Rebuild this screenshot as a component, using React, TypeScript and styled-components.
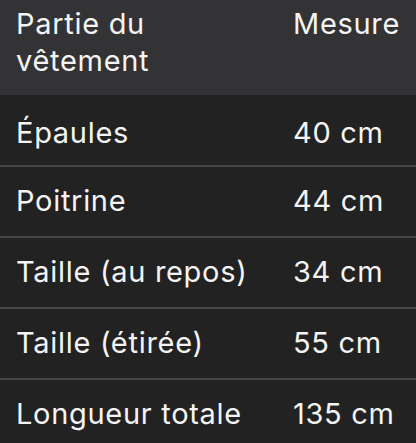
import React from "react";
import styled, { createGlobalStyle } from "styled-components";

const Global = createGlobalStyle`
  html, body { margin: 0; padding: 0; background: #222222; }
  body { font-family: Inter, Roboto, "Noto Sans", "Liberation Sans", sans-serif; }
`;

const Table = styled.div`
  width: 416px;
  height: 443px;
  background: #222222;
  color: #f4f4f4;
  font-size: 29px;
  letter-spacing: 0.7px;
  line-height: 37px;
  overflow: hidden;
`;

const Header = styled.div`
  display: grid;
  grid-template-columns: 277px 1fr;
  background: #333335;
  padding: 5px 0 16px;
  height: 95px;
  box-sizing: border-box;
`;

const Row = styled.div<{ $first?: boolean }>`
  display: grid;
  grid-template-columns: 277px 1fr;
  box-sizing: border-box;
  height: ${(p) => (p.$first ? "70px" : "71px")};
  padding-top: ${(p) => (p.$first ? "19px" : "15px")};
  border-top: ${(p) => (p.$first ? "none" : "2px solid #45464a")};
`;

const Cell = styled.div`
  padding-left: 16px;
  white-space: nowrap;
`;

const HeadCell = styled.div`
  padding-left: 16px;
`;

const rows: [string, string][] = [
  ["Épaules", "40 cm"],
  ["Poitrine", "44 cm"],
  ["Taille (au repos)", "34 cm"],
  ["Taille (étirée)", "55 cm"],
  ["Longueur totale", "135 cm"],
];

export default function App() {
  return (
    <>
      <Global />
      <Table>
        <Header>
          <HeadCell>
            Partie du
            <br />
            vêtement
          </HeadCell>
          <HeadCell>Mesure</HeadCell>
        </Header>
        {rows.map(([k, v], i) => (
          <Row key={k} $first={i === 0}>
            <Cell>{k}</Cell>
            <Cell>{v}</Cell>
          </Row>
        ))}
      </Table>
    </>
  );
}
